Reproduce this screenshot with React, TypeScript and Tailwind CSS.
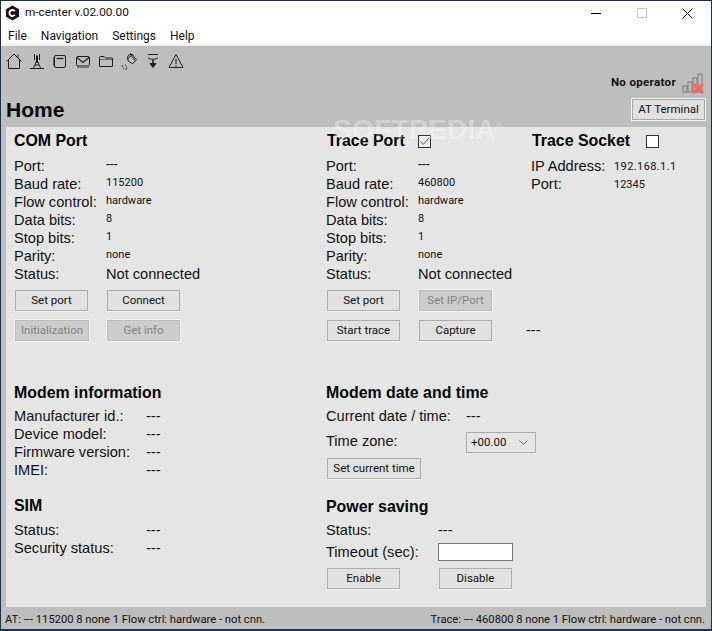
import React from "react";

const ui = "font-['Roboto','Noto_Sans',sans-serif]";

function Btn({ children, w = "w-[73px]", disabled = false }: { children: React.ReactNode; w?: string; disabled?: boolean }) {
  return (
    <div
      className={`${w} h-[21px] shrink-0 flex items-center justify-center border text-[11.5px] leading-none whitespace-nowrap ${ui} ${
        disabled ? "bg-[#cccccc] border-[#bfbfbf] text-[#838383] shadow-[0_0_0_1px_#efefef]" : "bg-[#e1e1e1] border-[#adadad] text-[#111111] shadow-[0_1px_0_0_#f4f4f4]"
      }`}
    >
      {children}
    </div>
  );
}

function Row({ label, value, w = "w-[92px]", big = false }: { label: string; value: string; w?: string; big?: boolean }) {
  const small = value === "---" ? "text-[14px]" : "text-[11px]";
  return (
    <div className="flex h-[18px] items-center">
      <div className={`${w} shrink-0 text-[14.6px] leading-none text-[#111111] whitespace-nowrap`}>{label}</div>
      <div className={big ? "text-[14.6px] leading-none text-[#111111] whitespace-nowrap" : `${small} leading-none text-[#111111] whitespace-nowrap -mt-[4px] ${ui}`}>{value}</div>
    </div>
  );
}

function Head({ children }: { children: React.ReactNode }) {
  return <div className="h-[20px] flex items-center font-bold text-[15.9px] leading-none text-[#050505] whitespace-nowrap">{children}</div>;
}

const stroke = { fill: "none", stroke: "#1e1e1e", strokeWidth: 1 };

function ToolIcons() {
  return (
    <div className="flex h-[20px] items-center gap-[7px] pl-[5px]">
      <svg width="16" height="16" viewBox="0 0 16 16" {...stroke}><path d="M0.5 8.5 8 1l7.5 7.5M2.5 6.8v8.7h11V6.8M12 4.5V1.5" /></svg>
      <svg width="16" height="16" viewBox="0 0 16 16" {...stroke}><path d="M1 15.5h14M4.5 15 8 7l3.5 8M6 12h4M7 9.5h2M5.5 1v6M10.5 1v6M7 5h2M7 3h2" /><path d="M8 3v6" strokeWidth="2" /></svg>
      <svg width="16" height="16" viewBox="0 0 16 16" {...stroke}><rect x="2.5" y="2.5" width="11" height="12" rx="1.5" /><path d="M4.5 5.5h7" strokeWidth="1.3" /><path d="M1.5 4v9" stroke="#666" /></svg>
      <svg width="16" height="16" viewBox="0 0 16 16" {...stroke}><rect x="1.5" y="3.5" width="13" height="9.5" rx="1.5" /><path d="M2 4.5l6 5 6-5" strokeWidth="1.2" /><path d="M2 14.5h12" stroke="#777" /></svg>
      <svg width="16" height="16" viewBox="0 0 16 16" {...stroke}><path d="M1.5 13.5V4.5a1 1 0 0 1 1-1h3.5l1.5 1.5h6a1 1 0 0 1 1 1v7.5h-13z" /><path d="M2 6.5h12" stroke="#666" /></svg>
      <svg width="17" height="17" viewBox="0 0 17 17" {...stroke}><path d="M7 3l2-2.2 3 1 1.5 3 2 1.5L13 9.5l-1.5 1-4-2L6.5 5z" /><path d="M9 1l5 6.5M7 5.5l4-3.5" /><path d="M0.5 13h1.5M4 12h1M2 15.5h1M4.5 16h1.5M5 14h1" strokeWidth="1.3" stroke="#444" /></svg>
      <svg width="16" height="16" viewBox="0 0 16 16" {...stroke}><path d="M3 1.5h10M3 4.5c2 2.5 8 2.5 10 0" /><path d="M8 7v6" strokeWidth="1.6" /><path d="M5 10.5 8 14.5l3-4z" fill="#1e1e1e" /></svg>
      <svg width="16" height="16" viewBox="0 0 16 16" {...stroke}><path d="M8 1.5 15 14.5H1z" /><path d="M8 6v5M8 12v1.5" /></svg>
    </div>
  );
}

function Signal() {
  return (
    <svg width="23" height="21" viewBox="0 0 23 21">
      <rect x="1" y="13" width="4" height="6" fill="none" stroke="#8f8f8f" strokeWidth="1.5" />
      <rect x="6" y="9" width="4" height="10" fill="none" stroke="#8f8f8f" strokeWidth="1.5" />
      <rect x="11" y="5" width="4" height="14" fill="none" stroke="#8f8f8f" strokeWidth="1.5" />
      <rect x="16" y="1" width="4" height="18" fill="none" stroke="#8f8f8f" strokeWidth="1.5" />
      <path d="M11 11l10 9M21 11l-10 9" stroke="#f8685c" strokeWidth="3.2" />
    </svg>
  );
}

export default function App() {
  return (
    <div className="relative w-[712px] h-[631px] overflow-hidden flex flex-col bg-[#bebebe] border-x border-t border-b-2 border-[#1c3150] font-['Liberation_Sans',Arial,sans-serif]">
      {/* title bar */}
      <div className={`h-[24px] shrink-0 bg-white flex items-center pl-[4px] ${ui}`}>
        <svg width="15" height="16" viewBox="0 0 15 16">
          <path d="M7.5 0.5 14 4.2v7.6l-6.5 3.7L1 11.8V4.2z" fill="#151515" />
          <path d="M9.8 6.2A3 3 0 1 0 9.8 9.8" fill="none" stroke="#fff" strokeWidth="1.8" />
        </svg>
        <div className="ml-[5px] text-[11.8px] leading-none text-[#111111]">m-center v.02.00.00</div>
        <div className="ml-auto flex items-center">
          <div className="w-[10px] h-px bg-black mr-[36px]" />
          <div className="w-[10px] h-[10px] border border-[#c8c8c8] mr-[35px]" />
          <svg width="11" height="11" viewBox="0 0 11 11" className="mr-[18px]"><path d="M0.5 0.5l10 10M10.5 0.5l-10 10" stroke="#111" strokeWidth="1" /></svg>
        </div>
      </div>
      {/* menu */}
      <div className={`h-[19px] shrink-0 bg-white flex items-center gap-[14px] pl-[7px] pt-[3px] text-[12px] leading-none text-[#111111] ${ui}`}>
        <span>File</span>
        <span>Navigation</span>
        <span>Settings</span>
        <span>Help</span>
      </div>
      <div className="h-[2px] shrink-0 bg-[#f0f0f0]" />

      {/* toolbar + heading */}
      <div className="h-[81px] shrink-0 flex flex-col">
        <div className="pt-[5px]"><ToolIcons /></div>
        <div className="flex-1 flex justify-between pl-[5px] pr-[5px]">
          <div className="self-end pb-[5px] font-bold text-[21px] leading-[24px] text-[#050505]">Home</div>
          <div className="flex flex-col items-end">
            <div className="flex items-center h-[24px] pr-[1px]">
              <span className={`font-bold text-[11.5px] tracking-[0.35px] leading-none text-[#111111] mr-[6px] ${ui}`}>No operator</span>
              <Signal />
            </div>
            <div className={`w-[75px] h-[23px] mt-[3px] flex items-center justify-center bg-[#e1e1e1] border border-[#f4f4f4] outline outline-1 -outline-offset-2 outline-[#a8a8a8] text-[11.5px] leading-none text-[#111111] ${ui}`}>AT Terminal</div>
          </div>
        </div>
      </div>

      {/* panel */}
      <div className="h-[480px] shrink-0 mx-[5px] bg-[#e5e5e5] px-[8px] flex flex-col">
        {/* top */}
        <div className="h-[256px] shrink-0 flex pt-[4px]">
          <div className="w-[312px] shrink-0">
            <Head>COM Port</Head>
            <div className="mt-[6px]">
              <Row label="Port:" value="---" />
              <Row label="Baud rate:" value="115200" />
              <Row label="Flow control:" value="hardware" />
              <Row label="Data bits:" value="8" />
              <Row label="Stop bits:" value="1" />
              <Row label="Parity:" value="none" />
              <Row label="Status:" value="Not connected" big />
            </div>
            <div className="flex gap-[19px] mt-[7px] pl-[1px]">
              <Btn>Set port</Btn>
              <Btn>Connect</Btn>
            </div>
            <div className="flex gap-[18px] mt-[9px] pl-[1px]">
              <Btn w="w-[74px]" disabled>Initialization</Btn>
              <Btn disabled>Get info</Btn>
            </div>
          </div>
          <div className="w-[205px] shrink-0">
            <div className="flex items-center pl-[1px]">
              <Head>Trace Port</Head>
              <div className="ml-[13px] w-[13px] h-[13px] border border-[#333333] bg-[#eeeeee] flex items-center justify-center">
                <svg width="11" height="11" viewBox="0 0 11 11"><path d="M1.5 5.5 4.2 8.5 9.8 2" fill="none" stroke="#555" strokeWidth="1" /></svg>
              </div>
            </div>
            <div className="mt-[6px]">
              <Row label="Port:" value="---" />
              <Row label="Baud rate:" value="460800" />
              <Row label="Flow control:" value="hardware" />
              <Row label="Data bits:" value="8" />
              <Row label="Stop bits:" value="1" />
              <Row label="Parity:" value="none" />
              <Row label="Status:" value="Not connected" big />
            </div>
            <div className="flex gap-[19px] mt-[7px] pl-[1px]">
              <Btn>Set port</Btn>
              <Btn disabled>Set IP/Port</Btn>
            </div>
            <div className="flex gap-[19px] mt-[9px] pl-[1px] items-center">
              <Btn>Start trace</Btn>
              <Btn>Capture</Btn>
              <span className="ml-[15px] text-[14.6px] leading-none text-[#111111] whitespace-nowrap">---</span>
            </div>
          </div>
          <div className="flex-1">
            <div className="flex items-center pl-[1px]">
              <Head>Trace Socket</Head>
              <div className="ml-[16px] w-[13px] h-[13px] border border-[#333333] bg-white" />
            </div>
            <div className="mt-[6px]">
              <div className="flex h-[18px] items-center">
                <div className="w-[83px] shrink-0 text-[14.6px] leading-none text-[#111111]">IP Address:</div>
                <div className={`text-[11px] tracking-[0.4px] leading-none text-[#111111] ${ui}`}>192.168.1.1</div>
              </div>
              <div className="flex h-[18px] items-center">
                <div className="w-[83px] shrink-0 text-[14.6px] leading-none text-[#111111]">Port:</div>
                <div className={`text-[11px] leading-none text-[#111111] ${ui}`}>12345</div>
              </div>
            </div>
          </div>
        </div>
        {/* bottom */}
        <div className="flex-1 flex">
          <div className="w-[312px] shrink-0">
            <Head>Modem information</Head>
            <div className="mt-[4px]">
              <Row label="Manufacturer id.:" value="---" w="w-[132px]" big />
              <Row label="Device model:" value="---" w="w-[132px]" big />
              <Row label="Firmware version:" value="---" w="w-[132px]" big />
              <Row label="IMEI:" value="---" w="w-[132px]" big />
            </div>
            <div className="mt-[17px]"><Head>SIM</Head></div>
            <div className="mt-[5px]">
              <Row label="Status:" value="---" w="w-[132px]" big />
              <Row label="Security status:" value="---" w="w-[132px]" big />
            </div>
          </div>
          <div className="flex-1">
            <Head>Modem date and time</Head>
            <div className="mt-[4px]">
              <Row label="Current date / time:" value="---" w="w-[140px]" big />
            </div>
            <div className="flex items-center h-[21px] mt-[7px]">
              <div className="w-[140px] text-[14.6px] leading-none text-[#111111] -mt-[3px]">Time zone:</div>
              <div className={`w-[70px] h-[21px] border border-[#adadad] flex items-center justify-between pl-[4px] pr-[7px] text-[11.5px] leading-none text-[#111111] ${ui}`}>
                <span>+00.00</span>
                <svg width="9" height="6" viewBox="0 0 9 6"><path d="M0.5 0.5 4.5 4.5 8.5 0.5" fill="none" stroke="#666" /></svg>
              </div>
            </div>
            <div className="mt-[5px] pl-[1px]"><Btn w="w-[94px]">Set current time</Btn></div>
            <div className="mt-[18px]"><Head>Power saving</Head></div>
            <div className="mt-[4px]">
              <Row label="Status:" value="---" w="w-[112px]" big />
            </div>
            <div className="flex items-center h-[18px] mt-[4px]">
              <div className="w-[112px] text-[14.6px] leading-none text-[#111111]">Timeout (sec):</div>
              <div className="w-[75px] h-[18px] bg-white border border-[#7a7a7a]" />
            </div>
            <div className="flex gap-[39px] mt-[7px] pl-[1px]">
              <Btn>Enable</Btn>
              <Btn>Disable</Btn>
            </div>
          </div>
        </div>
      </div>

      {/* status bar */}
      <div className={`flex-1 flex items-center justify-between pl-[4px] pr-[6px] pt-[3px] text-[11.2px] leading-none text-[#111111] whitespace-nowrap ${ui}`}>
        <span>AT: --- 115200 8 none 1 Flow ctrl: hardware - not cnn.</span>
        <span>Trace: --- 460800 8 none 1 Flow ctrl: hardware - not cnn.</span>
      </div>

      {/* watermark */}
      <div className="absolute left-[332px] top-[108px] text-[28.5px] leading-[34px] font-bold text-white opacity-30 pointer-events-none">
        SOFTPEDIA<span className="text-[8px] align-super">®</span>
      </div>
    </div>
  );
}
